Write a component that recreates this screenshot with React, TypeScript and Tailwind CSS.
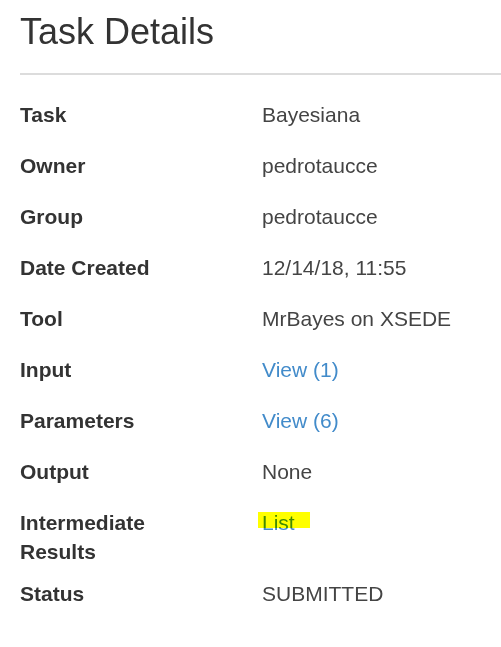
const rows: { label: string[]; value: string; link?: boolean; marked?: boolean }[] = [
    { label: ["Task"], value: "Bayesiana" },
    { label: ["Owner"], value: "pedrotaucce" },
    { label: ["Group"], value: "pedrotaucce" },
    { label: ["Date Created"], value: "12/14/18, 11:55" },
    { label: ["Tool"], value: "MrBayes on XSEDE" },
    { label: ["Input"], value: "View (1)", link: true },
    { label: ["Parameters"], value: "View (6)", link: true },
    { label: ["Output"], value: "None" },
    { label: ["Intermediate", "Results"], value: "List", link: true, marked: true },
    { label: ["Status"], value: "SUBMITTED" },
];

export default function App() {
    return (
        <div className="min-h-[647px] w-[501px] bg-white pl-5 font-['Liberation_Sans',Arial,sans-serif] text-[#333]">
            <h1 className="pt-[14px] text-[36px] leading-none">Task Details</h1>
            <hr className="mt-[23px] border-t-2 border-[#dcdcdc]" />
            <div className="mt-[14px] flex flex-col">
                {rows.map((row) => (
                    <DetailRow key={row.label.join(" ")} {...row} />
                ))}
            </div>
        </div>
    );
}

interface DetailRowProps {
    label: string[];
    value: string;
    link?: boolean;
    marked?: boolean;
}

function DetailRow({ label, value, link, marked }: DetailRowProps) {
    return (
        <div className={`flex pt-[11px] text-[21px] leading-[29px] ${label.length > 1 ? "h-[71px]" : "h-[51px]"}`}>
            <div className="w-[242px] shrink-0 font-bold text-[#333]">
                {label.map((line) => (
                    <div key={line}>{line}</div>
                ))}
            </div>
            <div>
                {link ? (
                    <a href="#" className="relative text-[#428bca]">
                        {value}
                        {marked && (
                            <span className="absolute left-[-4px] top-[1px] h-[16px] w-[52px] bg-[#ffff00] mix-blend-multiply" />
                        )}
                    </a>
                ) : (
                    <span className="text-[#444]">{value}</span>
                )}
            </div>
        </div>
    );
}
